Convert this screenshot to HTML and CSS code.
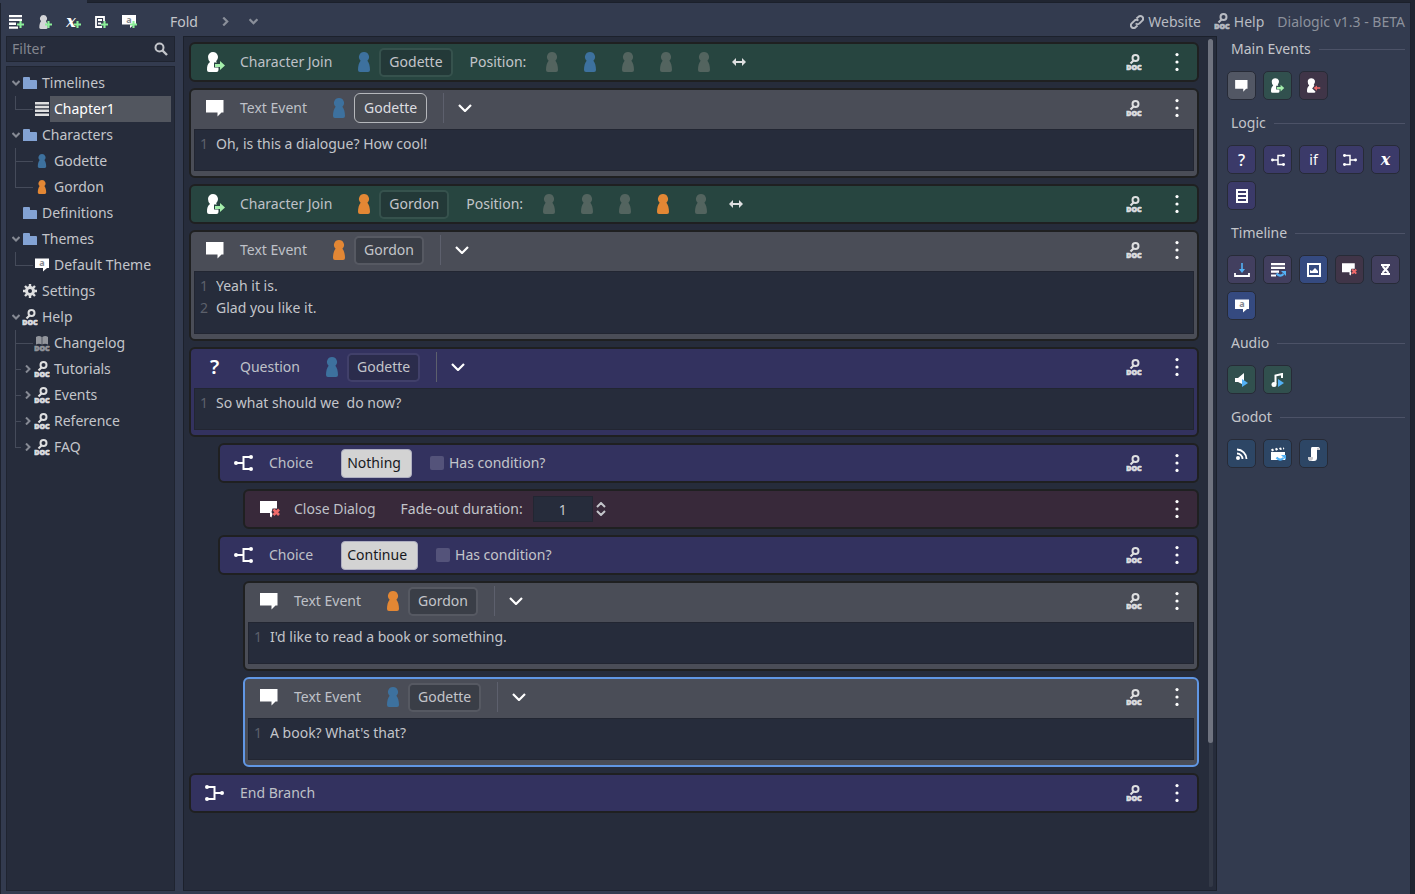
FILE: index.html
```html
<!DOCTYPE html>
<html lang="en">
<head>
<meta charset="utf-8">
<title>Dialogic</title>
<link rel="stylesheet" href="styles.css">
</head>
<body>
<svg class="sprite" aria-hidden="true">
  <symbol id="pawn" viewBox="0 0 12 20"><path d="M6 0a5 5 0 0 1 3.400 8.700C11 10.600 12 14 12 18q0 2-2 2H2q-2 0-2-2C0 14 1 10.600 2.600 8.700A5 5 0 0 1 6 0z"/></symbol>
  <symbol id="bubble" viewBox="0 0 18 17"><path d="M0 0h17.500v12.500H15.500L11.500 16.500V12.500H0z"/></symbol>
  <symbol id="join" viewBox="0 0 19 20"><path d="M6 0a5 5 0 0 1 3.600 8.400Q8.500 9.500 10 10.500H7v5h4.500V18q0 2-2 2H2q-2 0-2-2C0 14 .5 12 3 10Q1 8 1 5a5 5 0 0 1 5-5z"/><path fill="#a5efac" d="M8 12h5V9l5 4.500-5 4.500v-3H8z"/></symbol>
  <symbol id="leave" viewBox="0 0 19 20"><path d="M6 0a5 5 0 0 1 3.600 8.400Q8.500 9.500 10 10.500L7 14l4.500 4V18q0 2-2 2H2q-2 0-2-2C0 14 .5 12 3 10Q1 8 1 5a5 5 0 0 1 5-5z"/><path fill="#f06a6a" d="M18 12.500h-4.500V10L9 13.500l4.500 3.500v-2.500H18z"/></symbol>
  <symbol id="doc" viewBox="0 0 16 17"><circle cx="9.500" cy="4" r="3" fill="none" stroke="currentColor" stroke-width="2"/><path d="M7.500 6.500 4.500 9.500" fill="none" stroke="currentColor" stroke-width="2.200"/><text x="8" y="16" class="doc-text">DOC</text></symbol>
  <symbol id="book" viewBox="0 0 16 17"><path d="M2 2q3-2 5.700 0v7.500Q5 8 2 9.500zM8.300 2q3-2 5.700 0v7.500Q11 8 8.300 9.500z"/><text x="8" y="16" class="doc-text">DOC</text></symbol>
  <symbol id="folder" viewBox="0 0 14 12"><path d="M1 0h5q1 0 1 1v2h6q1 0 1 1v8H0V1q0-1 1-1z"/></symbol>
  <symbol id="lines" viewBox="0 0 14 14"><path d="M0 0h14v2.500H0zM0 3.800h14v2.500H0zM0 7.600h14v2.500H0zM0 11.400h14v2.500H0z"/></symbol>
  <symbol id="theme" viewBox="0 0 14 13"><path d="M0 0h14v9.500h-2L8 13V9.500H0z"/><text x="7" y="7.500" class="bubble-text">a</text></symbol>
  <symbol id="gear" viewBox="0 0 14 14"><circle cx="7" cy="7" r="3.500" fill="none" stroke="currentColor" stroke-width="3"/><path d="M7 0v3M7 11v3M0 7h3M11 7h3M2 2l2 2M10 10l2 2M12 2l-2 2M4 10l-2 2" stroke="currentColor" stroke-width="2.400"/></symbol>
  <symbol id="down" viewBox="0 0 14 8"><path d="M1 1l6 6 6-6" fill="none" stroke="currentColor" stroke-width="2.200"/></symbol>
  <symbol id="fold-down" viewBox="0 0 8 6"><path d="M.5 1L4 4.500 7.500 1" fill="none" stroke="currentColor" stroke-width="2"/></symbol>
  <symbol id="fold-right" viewBox="0 0 6 8"><path d="M1 .5L4.500 4 1 7.500" fill="none" stroke="currentColor" stroke-width="2"/></symbol>
  <symbol id="search" viewBox="0 0 14 14"><circle cx="5.500" cy="5.500" r="4" fill="none" stroke="currentColor" stroke-width="2"/><path d="M8.500 8.500l4.500 4.500" stroke="currentColor" stroke-width="2.400"/></symbol>
  <symbol id="link" viewBox="0 0 14 14"><g fill="none" stroke="currentColor" stroke-width="2"><path d="M6.500 3.500l2-1.700a2.600 2.600 0 0 1 3.800 3.800L9.500 8.400a2.600 2.600 0 0 1-3.800 0"/><path d="M7.500 10.500l-2 1.700a2.600 2.600 0 0 1-3.800-3.800L4.500 5.600a2.600 2.600 0 0 1 3.800 0"/></g></symbol>
  <symbol id="dots" viewBox="0 0 4 18"><circle cx="2" cy="1.600" r="1.600"/><circle cx="2" cy="9" r="1.600"/><circle cx="2" cy="16.400" r="1.600"/></symbol>
  <symbol id="choice" viewBox="0 0 19 16"><g fill="none" stroke="currentColor" stroke-width="2"><path d="M2 8h7M17 2H9.500v12H17"/></g><circle cx="2" cy="8" r="2"/><circle cx="17" cy="2" r="2"/><circle cx="17" cy="14" r="2"/></symbol>
  <symbol id="merge" viewBox="0 0 19 16"><g fill="none" stroke="currentColor" stroke-width="2"><path d="M17 8h-7M2 2h7.500v12H2"/></g><circle cx="17" cy="8" r="2"/><circle cx="2" cy="2" r="2"/><circle cx="2" cy="14" r="2"/></symbol>
  <symbol id="close" viewBox="0 0 20 17"><path d="M0 0h17v7.500h-4.500l-1 3.500 1 2-1 3.500-1.500-1V12H0z"/><path d="M13.500 8.500l5.500 5.500M19 8.500l-5.500 5.500" stroke="#f06a6a" stroke-width="2.600"/></symbol>
  <symbol id="arrows" viewBox="0 0 14 8"><path d="M0 4l4-4v3h6V0l4 4-4 4V5H4v3z"/></symbol>
  <symbol id="spin" viewBox="0 0 10 14"><path d="M1 5l4-4 4 4M1 9l4 4 4-4" fill="none" stroke="currentColor" stroke-width="2"/></symbol>
  <symbol id="plus" viewBox="0 0 6 6"><path d="M3 0v6M0 3h6" stroke="#8bee99" stroke-width="1.800"/></symbol>
  <symbol id="add-timeline" viewBox="0 0 16 16"><path d="M1 1h13v2.300H1zM1 4.800h13v2.300H1zM1 8.600h7v2.300H1zM1 12.400h9v2.300H1z"/><use href="#plus" x="9" y="7" width="7" height="7"/></symbol>
  <symbol id="add-character" viewBox="0 0 16 16"><use href="#pawn" x="1" y="1" width="11" height="14"/><use href="#plus" x="8" y="7" width="7" height="7"/></symbol>
  <symbol id="add-value" viewBox="0 0 16 16"><text x="6" y="13" class="var-text">x</text><use href="#plus" x="9" y="7" width="7" height="7"/></symbol>
  <symbol id="add-glossary" viewBox="0 0 16 16"><path d="M11 7V3H3v10h6M5 6h4M5 9.500h3" fill="none" stroke="currentColor" stroke-width="1.800"/><use href="#plus" x="8" y="7" width="7" height="7"/></symbol>
  <symbol id="add-theme" viewBox="0 0 16 16"><use href="#theme" x="1" y="1" width="14" height="13"/><use href="#plus" x="9" y="7" width="7" height="7"/></symbol>
  <symbol id="settings-list" viewBox="0 0 12 14"><path fill-rule="evenodd" d="M0 0h12v14H0zM2 2v2h8V2zM2 6v2h8V6zM2 10v2h8v-2z"/></symbol>
  <symbol id="download" viewBox="0 0 16 16"><path d="M1 11v3h14v-3" fill="none" stroke="currentColor" stroke-width="1.800"/><path d="M8 1v8" stroke="#53b1f5" stroke-width="1.600"/><path fill="#53b1f5" d="M5 7h6l-3 4z"/></symbol>
  <symbol id="change-timeline" viewBox="0 0 16 16"><path d="M1 1h14v2.200H1zM1 4.800h14V7H1zM1 8.600h8v2.200H1zM1 12.400h5v2.200H1z"/><path d="M6.500 11.500q3.500 4 7 .5" fill="none" stroke="#53b1f5" stroke-width="2.200"/><path fill="#53b1f5" d="M11 9h5v5z"/></symbol>
  <symbol id="image" viewBox="0 0 14 14"><path fill-rule="evenodd" d="M0 0h14v14H0zM2 2v10h10V2zM3 10V7l2 1 3-3 3 3v2z"/></symbol>
  <symbol id="hourglass" viewBox="0 0 10 12"><path fill-rule="evenodd" d="M0 0h10v2H9q0 2-2.500 4Q9 8 9 10h1v2H0v-2h1q0-2 2.500-4Q1 4 1 2H0zM3 2.500h4L5 4zM5 8l-2 2h4z"/></symbol>
  <symbol id="speaker" viewBox="0 0 14 14"><path d="M0 5h3l6-5v12L3 9H0z"/><path fill="#53b1f5" d="M7 6l6 4-6 4z"/></symbol>
  <symbol id="music" viewBox="0 0 14 14"><path d="M4.500 11V2.500L11 1v4" fill="none" stroke="currentColor" stroke-width="2"/><circle cx="3" cy="11.500" r="2.500"/><path fill="#53b1f5" d="M7 6l6 4-6 4z"/></symbol>
  <symbol id="signal" viewBox="0 0 12 12"><circle cx="2" cy="10" r="2"/><path d="M1 5.500A5.500 5.500 0 0 1 6.500 11M1 1.500A9.500 9.500 0 0 1 10.500 11" fill="none" stroke="currentColor" stroke-width="1.800"/></symbol>
  <symbol id="scene" viewBox="0 0 16 16"><path d="M1 6h14v8H1zM1 3.500l2-1 1 2-2 1zM5 2.700l2-1 1 2-2 1zM9 2l2-.5 1 2-2 .5zM13 1l1.500 2-1.500.5z"/><path d="M6.500 11.500q3.500 4 7 .5" fill="none" stroke="#53b1f5" stroke-width="2.200"/><path fill="#53b1f5" d="M11 9h5v5z"/></symbol>
  <symbol id="script" viewBox="0 0 14 14"><path d="M5 0h6q2 0 2 3h-3v8q0 3-3 3H3q-2-1-2-4h3V2q0-2 1-2z"/><path d="M1 10h5v2q-1 2-3 2-2-1-2-4zM10 3V1q2-1 3 2z" fill="#c8c8cc"/></symbol>
</svg>

<div class="window">
  <div class="tabstrip"><div class="tab"></div></div>
  <div class="app">
    <header class="toolbar">
      <button class="tool" aria-label="Add timeline"><svg class="i16"><use href="#add-timeline"/></svg></button>
      <button class="tool dim" aria-label="Add character"><svg class="i16"><use href="#add-character"/></svg></button>
      <button class="tool" aria-label="Add value"><svg class="i16"><use href="#add-value"/></svg></button>
      <button class="tool" aria-label="Add glossary entry"><svg class="i16"><use href="#add-glossary"/></svg></button>
      <button class="tool" aria-label="Add theme"><svg class="i16"><use href="#add-theme"/></svg></button>
      <span class="fold-label">Fold</span>
      <button class="tool muted" aria-label="Fold all"><svg class="right-arrow"><use href="#fold-right"/></svg></button>
      <button class="tool muted" aria-label="Unfold all"><svg class="down-arrow"><use href="#fold-down"/></svg></button>
      <nav class="links">
        <a href="#website"><svg class="i14"><use href="#link"/></svg>Website</a>
        <a href="#help"><svg class="i-doc"><use href="#doc"/></svg>Help</a>
        <span class="version">Dialogic v1.3 - BETA</span>
      </nav>
    </header>

    <div class="workspace">
      <aside class="sidebar">
        <label class="filter"><input type="text" placeholder="Filter" aria-label="Filter"><svg class="i14"><use href="#search"/></svg></label>
        <ul class="tree">
          <li class="row"><button class="twisty" aria-label="Collapse"><svg class="down-arrow"><use href="#fold-down"/></svg></button><svg class="i-folder"><use href="#folder"/></svg><a href="#timelines">Timelines</a></li>
          <li class="row"><span class="guide last"></span><svg class="i14 soft"><use href="#lines"/></svg><a class="selected" href="#chapter1">Chapter1</a></li>
          <li class="row"><button class="twisty" aria-label="Collapse"><svg class="down-arrow"><use href="#fold-down"/></svg></button><svg class="i-folder"><use href="#folder"/></svg><a href="#characters">Characters</a></li>
          <li class="row"><span class="guide"></span><svg class="i-person blue"><use href="#pawn"/></svg><a href="#godette">Godette</a></li>
          <li class="row"><span class="guide last"></span><svg class="i-person orange"><use href="#pawn"/></svg><a href="#gordon">Gordon</a></li>
          <li class="row"><span class="twisty"></span><svg class="i-folder"><use href="#folder"/></svg><a href="#definitions">Definitions</a></li>
          <li class="row"><button class="twisty" aria-label="Collapse"><svg class="down-arrow"><use href="#fold-down"/></svg></button><svg class="i-folder"><use href="#folder"/></svg><a href="#themes">Themes</a></li>
          <li class="row"><span class="guide last"></span><svg class="i14 white"><use href="#theme"/></svg><a href="#default-theme">Default Theme</a></li>
          <li class="row"><span class="twisty"></span><svg class="i14 soft"><use href="#gear"/></svg><a href="#settings">Settings</a></li>
          <li class="row"><button class="twisty" aria-label="Collapse"><svg class="down-arrow"><use href="#fold-down"/></svg></button><svg class="i-doc soft"><use href="#doc"/></svg><a href="#help-tree">Help</a></li>
          <li class="row"><span class="guide"></span><svg class="i-doc gray"><use href="#book"/></svg><a href="#changelog">Changelog</a></li>
          <li class="row"><span class="guide short"></span><button class="twisty-sub" aria-label="Expand"><svg class="right-arrow"><use href="#fold-right"/></svg></button><svg class="i-doc soft"><use href="#doc"/></svg><a href="#tutorials">Tutorials</a></li>
          <li class="row"><span class="guide short"></span><button class="twisty-sub" aria-label="Expand"><svg class="right-arrow"><use href="#fold-right"/></svg></button><svg class="i-doc soft"><use href="#doc"/></svg><a href="#events">Events</a></li>
          <li class="row"><span class="guide short"></span><button class="twisty-sub" aria-label="Expand"><svg class="right-arrow"><use href="#fold-right"/></svg></button><svg class="i-doc soft"><use href="#doc"/></svg><a href="#reference">Reference</a></li>
          <li class="row"><span class="guide short last"></span><button class="twisty-sub" aria-label="Expand"><svg class="right-arrow"><use href="#fold-right"/></svg></button><svg class="i-doc soft"><use href="#doc"/></svg><a href="#faq">FAQ</a></li>
        </ul>
      </aside>

      <main class="timeline">
        <div class="events">
          <article class="event green">
            <div class="head"><span class="lead"><svg class="i-join"><use href="#join"/></svg></span><span class="title">Character Join</span>
              <svg class="person blue"><use href="#pawn"/></svg><button class="picker">Godette</button>
              <span class="position">Position:</span>
              <span class="seats"><button aria-label="Position 1"><svg class="person off"><use href="#pawn"/></svg></button><button aria-label="Position 2"><svg class="person blue"><use href="#pawn"/></svg></button><button aria-label="Position 3"><svg class="person off"><use href="#pawn"/></svg></button><button aria-label="Position 4"><svg class="person off"><use href="#pawn"/></svg></button><button aria-label="Position 5"><svg class="person off"><use href="#pawn"/></svg></button></span><button class="mirror" aria-label="Mirror"><svg class="i-arrows"><use href="#arrows"/></svg></button>
              <span class="actions"><button aria-label="Documentation"><svg class="i-doc soft"><use href="#doc"/></svg></button><button aria-label="More"><svg class="i-dots"><use href="#dots"/></svg></button></span></div>
          </article>

          <article class="event slate">
            <div class="head"><span class="lead"><svg class="i-bubble"><use href="#bubble"/></svg></span><span class="title">Text Event</span>
              <svg class="person blue"><use href="#pawn"/></svg><button class="picker focus">Godette</button>
              <button class="expand" aria-label="Toggle body"><svg class="i-chevron"><use href="#down"/></svg></button>
              <span class="actions"><button aria-label="Documentation"><svg class="i-doc soft"><use href="#doc"/></svg></button><button aria-label="More"><svg class="i-dots"><use href="#dots"/></svg></button></span></div>
            <div class="editor"><div class="lines">1</div><textarea aria-label="Text">Oh, is this a dialogue? How cool!</textarea></div>
          </article>

          <article class="event green">
            <div class="head"><span class="lead"><svg class="i-join"><use href="#join"/></svg></span><span class="title">Character Join</span>
              <svg class="person orange"><use href="#pawn"/></svg><button class="picker">Gordon</button>
              <span class="position">Position:</span>
              <span class="seats"><button aria-label="Position 1"><svg class="person off"><use href="#pawn"/></svg></button><button aria-label="Position 2"><svg class="person off"><use href="#pawn"/></svg></button><button aria-label="Position 3"><svg class="person off"><use href="#pawn"/></svg></button><button aria-label="Position 4"><svg class="person orange"><use href="#pawn"/></svg></button><button aria-label="Position 5"><svg class="person off"><use href="#pawn"/></svg></button></span><button class="mirror" aria-label="Mirror"><svg class="i-arrows"><use href="#arrows"/></svg></button>
              <span class="actions"><button aria-label="Documentation"><svg class="i-doc soft"><use href="#doc"/></svg></button><button aria-label="More"><svg class="i-dots"><use href="#dots"/></svg></button></span></div>
          </article>

          <article class="event slate">
            <div class="head"><span class="lead"><svg class="i-bubble"><use href="#bubble"/></svg></span><span class="title">Text Event</span>
              <svg class="person orange"><use href="#pawn"/></svg><button class="picker">Gordon</button>
              <button class="expand" aria-label="Toggle body"><svg class="i-chevron"><use href="#down"/></svg></button>
              <span class="actions"><button aria-label="Documentation"><svg class="i-doc soft"><use href="#doc"/></svg></button><button aria-label="More"><svg class="i-dots"><use href="#dots"/></svg></button></span></div>
            <div class="editor two"><div class="lines">1<br>2</div><textarea aria-label="Text">Yeah it is.
Glad you like it.</textarea></div>
          </article>

          <article class="event indigo">
            <div class="head"><span class="lead"><span class="question-mark">?</span></span><span class="title">Question</span>
              <svg class="person blue"><use href="#pawn"/></svg><button class="picker">Godette</button>
              <button class="expand" aria-label="Toggle body"><svg class="i-chevron"><use href="#down"/></svg></button>
              <span class="actions"><button aria-label="Documentation"><svg class="i-doc soft"><use href="#doc"/></svg></button><button aria-label="More"><svg class="i-dots"><use href="#dots"/></svg></button></span></div>
            <div class="editor"><div class="lines">1</div><textarea aria-label="Question">So what should we  do now?</textarea></div>
          </article>

          <article class="event indigo level1">
            <div class="head"><span class="lead"><svg class="i-branch"><use href="#choice"/></svg></span><span class="title">Choice</span>
              <input class="choice-name" type="text" value="Nothing" aria-label="Choice text">
              <label class="condition"><input type="checkbox">Has condition?</label>
              <span class="actions"><button aria-label="Documentation"><svg class="i-doc soft"><use href="#doc"/></svg></button><button aria-label="More"><svg class="i-dots"><use href="#dots"/></svg></button></span></div>
          </article>

          <article class="event maroon level2">
            <div class="head"><span class="lead"><svg class="i-close"><use href="#close"/></svg></span><span class="title">Close Dialog</span>
              <label class="duration">Fade-out duration:<input type="text" value="1"></label><button class="spinner" aria-label="Adjust duration"><svg class="i-spin"><use href="#spin"/></svg></button>
              <span class="actions"><button aria-label="More"><svg class="i-dots"><use href="#dots"/></svg></button></span></div>
          </article>

          <article class="event indigo level1">
            <div class="head"><span class="lead"><svg class="i-branch"><use href="#choice"/></svg></span><span class="title">Choice</span>
              <input class="choice-name" type="text" value="Continue" aria-label="Choice text">
              <label class="condition"><input type="checkbox">Has condition?</label>
              <span class="actions"><button aria-label="Documentation"><svg class="i-doc soft"><use href="#doc"/></svg></button><button aria-label="More"><svg class="i-dots"><use href="#dots"/></svg></button></span></div>
          </article>

          <article class="event slate level2">
            <div class="head"><span class="lead"><svg class="i-bubble"><use href="#bubble"/></svg></span><span class="title">Text Event</span>
              <svg class="person orange"><use href="#pawn"/></svg><button class="picker">Gordon</button>
              <button class="expand" aria-label="Toggle body"><svg class="i-chevron"><use href="#down"/></svg></button>
              <span class="actions"><button aria-label="Documentation"><svg class="i-doc soft"><use href="#doc"/></svg></button><button aria-label="More"><svg class="i-dots"><use href="#dots"/></svg></button></span></div>
            <div class="editor"><div class="lines">1</div><textarea aria-label="Text">I'd like to read a book or something.</textarea></div>
          </article>

          <article class="event slate level2 active">
            <div class="head"><span class="lead"><svg class="i-bubble"><use href="#bubble"/></svg></span><span class="title">Text Event</span>
              <svg class="person blue"><use href="#pawn"/></svg><button class="picker">Godette</button>
              <button class="expand" aria-label="Toggle body"><svg class="i-chevron"><use href="#down"/></svg></button>
              <span class="actions"><button aria-label="Documentation"><svg class="i-doc soft"><use href="#doc"/></svg></button><button aria-label="More"><svg class="i-dots"><use href="#dots"/></svg></button></span></div>
            <div class="editor"><div class="lines">1</div><textarea aria-label="Text">A book? What's that?</textarea></div>
          </article>

          <article class="event indigo">
            <div class="head"><span class="lead"><svg class="i-branch"><use href="#merge"/></svg></span><span class="title">End Branch</span>
              <span class="actions"><button aria-label="Documentation"><svg class="i-doc soft"><use href="#doc"/></svg></button><button aria-label="More"><svg class="i-dots"><use href="#dots"/></svg></button></span></div>
          </article>
        </div>
        <div class="scrollbar"><div class="thumb"></div></div>
      </main>

      <aside class="palette">
        <section><h2>Main Events</h2><div class="buttons">
          <button class="p-slate" aria-label="Text"><svg class="s-bubble"><use href="#bubble"/></svg></button>
          <button class="p-green" aria-label="Join"><svg class="s-join"><use href="#join"/></svg></button>
          <button class="p-maroon" aria-label="Leave"><svg class="s-join"><use href="#leave"/></svg></button></div></section>
        <section><h2>Logic</h2><div class="buttons">
          <button class="p-indigo strong">?</button>
          <button class="p-indigo" aria-label="Choice"><svg class="s-branch"><use href="#choice"/></svg></button>
          <button class="p-indigo">if</button>
          <button class="p-indigo" aria-label="End branch"><svg class="s-branch"><use href="#merge"/></svg></button>
          <button class="p-indigo var">x</button>
          <button class="p-indigo" aria-label="Set value"><svg class="s-list"><use href="#settings-list"/></svg></button></div></section>
        <section><h2>Timeline</h2><div class="buttons">
          <button class="p-violet" aria-label="Anchor"><svg class="i16"><use href="#download"/></svg></button>
          <button class="p-violet" aria-label="Change timeline"><svg class="i16"><use href="#change-timeline"/></svg></button>
          <button class="p-blue" aria-label="Background"><svg class="i14"><use href="#image"/></svg></button>
          <button class="p-maroon" aria-label="Close dialog"><svg class="s-close"><use href="#close"/></svg></button>
          <button class="p-violet" aria-label="Wait"><svg class="s-hourglass"><use href="#hourglass"/></svg></button>
          <button class="p-blue" aria-label="Theme"><svg class="i14"><use href="#theme"/></svg></button></div></section>
        <section><h2>Audio</h2><div class="buttons">
          <button class="p-green" aria-label="Sound"><svg class="i14"><use href="#speaker"/></svg></button>
          <button class="p-green" aria-label="Music"><svg class="i14"><use href="#music"/></svg></button></div></section>
        <section><h2>Godot</h2><div class="buttons">
          <button class="p-steel" aria-label="Signal"><svg class="s-signal"><use href="#signal"/></svg></button>
          <button class="p-steel" aria-label="Change scene"><svg class="i16"><use href="#scene"/></svg></button>
          <button class="p-steel" aria-label="Call node"><svg class="i14"><use href="#script"/></svg></button></div></section>
      </aside>
    </div>
  </div>
</div>
</body>
</html>
```
FILE: styles.css
```css
* { box-sizing: border-box; }
body {
  margin: 0;
  background: #202531;
  color: #c3c5ca;
  font: 14px/20px "Noto Sans", sans-serif;
}
button, input, textarea {
  font: inherit;
  color: inherit;
  background: none;
  border: 0;
  margin: 0;
  padding: 0;
  outline: 0;
}
a { color: inherit; text-decoration: none; }
svg { display: block; flex: none; fill: currentColor; }
ul { list-style: none; margin: 0; padding: 0; }
.sprite { display: none; }
.doc-text { font: 900 7px "Noto Sans", sans-serif; text-anchor: middle; stroke: currentColor; stroke-width: 0.7px; }
.bubble-text { font: 700 9px "Noto Sans", sans-serif; text-anchor: middle; fill: #85888f; }
.var-text { font: italic 700 16px "DejaVu Serif", serif; text-anchor: middle; }

.i16 { width: 16px; height: 16px; }
.i14 { width: 14px; height: 14px; }
.i-doc { width: 16px; height: 17px; }
.i-folder { width: 14px; height: 12px; color: #83a3d4; }
.i-person { width: 14px; height: 14px; }
.i-join { width: 19px; height: 20px; }
.i-bubble { width: 18px; height: 17px; }
.i-branch { width: 19px; height: 16px; }
.i-close { width: 20px; height: 17px; }
.i-chevron { width: 14px; height: 8px; }
.i-arrows { width: 14px; height: 8px; color: #dedfe0; }
.i-dots { width: 4px; height: 18px; }
.i-spin { width: 10px; height: 14px; }
.down-arrow { width: 8px; height: 6px; }
.right-arrow { width: 6px; height: 8px; }
.blue { color: #3d719e; }
.orange { color: #e38734; }
.off { color: #53645f; }
.soft { color: #dedfe0; }
.white { color: #fff; }
.gray { color: #92959c; }

.window { display: flex; flex-direction: column; min-height: 100vh; padding-right: 4px; }
.tabstrip { height: 3px; border-bottom: 1px solid #1b202b; }
.tab { width: 87px; height: 3px; background: #333b4f; }
.app {
  flex: 1;
  display: flex;
  flex-direction: column;
  padding: 0 0 3px 5px;
  background: #333b4f;
  border: solid #1d222e;
  border-width: 0 1px;
}
.toolbar { display: flex; align-items: center; height: 33px; padding: 4px 5px 0 0; }
.tool { display: flex; justify-content: center; width: 28px; color: #fff; }
.tool:first-child { width: 20px; margin-right: 5px; }
.dim { color: #d4d5d8; }
.muted { color: #8a8f9a; }
.muted svg { width: 9px; height: 9px; }
.fold-label { margin: 0 14px 0 27px; }
.links { display: flex; align-items: center; margin-left: auto; color: #b8bbc2; }
.links a { display: flex; align-items: center; gap: 4px; margin-right: 13px; }
.version { color: #8c919c; }

.workspace { flex: 1; display: flex; }
.sidebar { flex: none; width: 169px; margin-right: 8px; display: flex; flex-direction: column; gap: 4px; }
.filter {
  display: flex;
  align-items: center;
  height: 26px;
  padding: 0 6px 0 5px;
  background: #262c3b;
  border: 1px solid #1f2430;
}
.filter input { flex: 1; min-width: 0; height: 20px; }
.filter input::placeholder { color: #83868f; }
.tree { flex: 1; padding: 3px 3px 0 5px; background: #262c3b; border: 1px solid #1f2430; }
.row { display: flex; align-items: center; height: 26px; }
.row a { flex: 1; margin-left: 1px; padding-left: 4px; line-height: 26px; white-space: nowrap; }
.row .i-doc { margin: 0 -1px; }
.row a.selected { background: #52565f; color: #fff; }
.twisty { flex: none; width: 8px; height: 20px; margin-right: 3px; display: flex; align-items: center; color: #868a94; }
.twisty-sub { flex: none; width: 6px; height: 20px; margin: 0 4px 0 4px; color: #868a94; }
.guide {
  flex: none;
  width: 18px;
  height: 26px;
  margin: 0 2px 0 3px;
  background: linear-gradient(#454b5a, #454b5a) 0 0 / 1px 100% no-repeat, linear-gradient(#454b5a, #454b5a) 0 13px / 100% 1px no-repeat;
}
.guide.last { background-size: 1px 13px, 100% 1px; }
.guide.short { width: 6px; margin-right: 0; }

.timeline { flex: 1; min-width: 0; display: flex; background: #262c3b; border: 1px solid #1c212c; }
.events { flex: 1; min-width: 0; display: flex; flex-direction: column; gap: 6px; padding: 5px 9px 5px 5px; }
.scrollbar { width: 5px; margin: 2px 3px 3px 0; background: linear-gradient(#333947, #333947) 1px 0 / 4px 100% no-repeat; border-radius: 3px; }
.thumb { width: 5px; height: 83%; background: #6f737f; border-radius: 3px; }

.event { border: 2px solid #1f2021; border-radius: 6px; }
.green { background: #274540; }
.slate { background: #4a4d57; }
.indigo { background: #33325f; }
.maroon { background: #38293a; }
.level1 { margin-left: 29px; }
.level2 { margin-left: 54px; }
.event.active { border-color: #6197e4; }
.head { display: flex; align-items: center; height: 36px; }
.lead { flex: none; width: 34px; margin-left: 15px; display: flex; align-items: center; color: #fff; }
.lead .i-join { margin-left: 1px; }
.lead .i-branch { margin-left: -1px; }
.question-mark { width: 17px; font-size: 20px; font-weight: 600; text-align: center; }
.title { white-space: nowrap; color: #bfc1c8; }
.person { width: 12px; height: 20px; }
.title + .person { margin: 0 9px 0 26px; }
.picker {
  height: 29px;
  padding: 0 8px;
  border: 2px solid rgba(255, 255, 255, 0.07);
  border-radius: 5px;
  background: rgba(30, 33, 42, 0.35) padding-box;
}
.picker.focus { border: 1px solid #b5b7bb; border-radius: 6px; padding: 0 9px; height: 30px; background: #484b52; color: #dcdde0; }
.expand { display: flex; align-items: center; height: 30px; margin-left: 16px; padding-left: 14px; border-left: 1px solid #5d606d; color: #fff; }
.position { margin-left: 17px; }
.seats { display: flex; align-items: center; gap: 26px; margin-left: 20px; }
.seats button { display: block; }
.mirror { margin-left: 22px; }
.actions { display: flex; align-items: center; margin-left: auto; padding-right: 18px; gap: 33px; }
.actions .i-dots { color: #fff; }
.editor {
  display: flex;
  height: 42px;
  margin: 3px 3px 5px;
  padding: 3px 5px 0;
  background: #262c3b;
  border: 1px solid #222632;
  line-height: 22px;
}
.editor.two { height: 63px; }
.lines { flex: none; width: 16px; color: #5c606b; }
.editor textarea { flex: 1; height: 100%; resize: none; overflow: hidden; line-height: 22px; }
.choice-name {
  field-sizing: content;
  height: 29px;
  margin-left: 28px;
  padding: 0 10px 2px 5px;
  background: #d3d3d3;
  color: #17181c;
  border: 1px solid #aeaec0;
  border-radius: 4px;
}
.condition { display: flex; align-items: center; gap: 5px; margin-left: 18px; }
.condition input { appearance: none; width: 14px; height: 14px; border-radius: 2px; background: #54537a; }
.duration { display: flex; align-items: center; gap: 10px; margin-left: 25px; }
.duration input { width: 60px; height: 26px; text-align: center; background: #262c3b; border: 1px solid #222632; }
.spinner { margin-left: 3px; }

.palette { flex: none; width: 193px; padding: 2px 5px 0 10px; }
.palette h2 { display: flex; align-items: center; gap: 8px; margin: 0 0 11px 4px; font-size: 14px; font-weight: 400; line-height: 22px; }
.palette h2::after { content: ""; flex: 1; height: 1px; background: #4c5267; }
.buttons { display: flex; flex-wrap: wrap; gap: 7px; margin-bottom: 12px; }
.buttons button {
  display: flex;
  align-items: center;
  justify-content: center;
  width: 29px;
  height: 29px;
  border: 1px solid #272b37;
  border-radius: 5px;
  color: #fff;
}
.buttons .strong { font-size: 16px; font-weight: 500; }
.buttons .var { font: italic 700 16px/20px "DejaVu Serif", serif; }
.p-slate { background: #525764; }
.p-green { background: #31504e; }
.p-maroon { background: #403548; }
.p-indigo { background: #3b3a69; }
.p-violet { background: #423f5f; }
.p-blue { background: #354a80; }
.p-steel { background: #2d4665; }
.s-bubble { width: 13px; height: 12px; }
.s-join { width: 14px; height: 15px; }
.s-branch { width: 14px; height: 12px; }
.s-list { width: 12px; height: 14px; }
.s-close { width: 15px; height: 13px; }
.s-hourglass { width: 9px; height: 11px; }
.s-signal { width: 12px; height: 12px; }
```
